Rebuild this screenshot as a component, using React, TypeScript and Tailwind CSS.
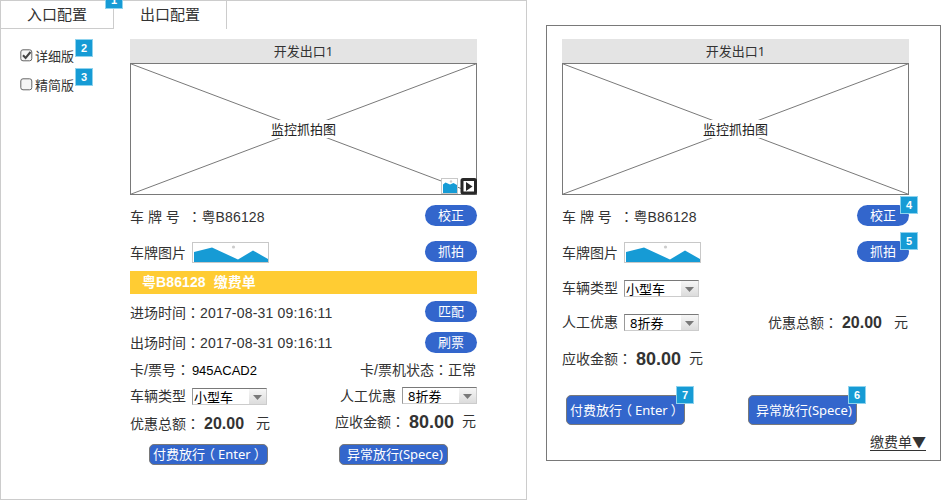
import React from 'react';

const SANS = "font-['Liberation_Sans','Noto_Sans_CJK_SC',sans-serif]";
const UI = "font-['Noto_Sans','Noto_Sans_CJK_SC',sans-serif]";

function Colon() {
  return <span className="font-['Noto_Sans_CJK_TC',sans-serif]">：</span>;
}

function Badge({ n, className }: { n: number; className: string }) {
  return (
    <span
      className={`absolute flex h-[18px] w-[18px] items-center justify-center border border-[#8fd3ee] bg-[#169bd5] text-[11px] leading-none font-bold text-white ${className}`}
    >
      {n}
    </span>
  );
}

function Pill({ children, badge }: { children: React.ReactNode; badge?: number }) {
  return (
    <button className={`relative ml-auto h-[21px] w-[52px] rounded-full bg-[#3366cc] text-[13px] leading-[21px] text-white ${UI}`}>
      {children}
      {badge && <Badge n={badge} className={`-top-[9px] left-[43px] ${SANS}`} />}
    </button>
  );
}

function Action({ children, className, badge }: { children: React.ReactNode; className: string; badge?: number }) {
  return (
    <button className={`relative flex items-center rounded-[5px] border border-[#797979] bg-[#3366cc] text-[13px] leading-none whitespace-nowrap text-white ${UI} ${className}`}>
      {children}
      {badge && <Badge n={badge} className={`-top-[10px] -right-[10px] ${SANS}`} />}
    </button>
  );
}

function PayLabel() {
  return (
    <>
      付费放行<span className="-ml-[3px] mr-[3px]">（</span>Enter<span className="ml-[3px]">）</span>
    </>
  );
}

function Select({ children, className = '' }: { children: React.ReactNode; className?: string }) {
  return (
    <div className={`flex h-[17px] w-[75px] shrink-0 border border-t-[#797979] border-r-[#ccc] border-b-[#ccc] border-l-[#999] bg-white text-[13px] leading-[16px] text-black ${UI} ${className}`}>
      <span className="flex-1 pl-px whitespace-pre">{children}</span>
      <span className="flex h-[15px] w-[17px] items-center justify-center bg-linear-to-b from-[#f6f6f6] to-[#dcdcdc] pt-[2px]">
        <svg width="9" height="5" viewBox="0 0 9 5">
          <path d="M0 0h9L4.5 5z" fill="#797979" />
        </svg>
      </span>
    </div>
  );
}

function PlateImage() {
  return (
    <svg className="ml-[6px] shrink-0" width="77" height="21" viewBox="0 0 77 21">
      <rect x=".5" y=".5" width="76" height="20" fill="#fff" stroke="#c8c8c8" />
      <path d="M2 10L20 5.500 46 17.500 61 8.500 76 17V20H2z" fill="#169bd5" />
      <circle cx="41.500" cy="5" r="1.600" fill="#ccc" />
    </svg>
  );
}

function Monitor({ controls = false }: { controls?: boolean }) {
  return (
    <>
      <div className={`h-6 bg-[#e4e4e4] text-center text-[13px] leading-[25px] text-[#333] ${UI}`}>开发出口1</div>
      <div className="relative flex h-[132px] items-center justify-center">
        <svg className="absolute inset-0" width="347" height="132" viewBox="0 0 347 132">
          <rect x=".5" y=".5" width="346" height="131" fill="#fff" stroke="#797979" />
          <path d="M0 .5L347 131.500M0 131.500L347 .5" stroke="#797979" />
        </svg>
        <span className={`relative h-[18px] bg-white px-[2px] text-[13px] leading-[18px] text-[#222] ${UI}`}>监控抓拍图</span>
        {controls && (
          <svg className="absolute right-0 bottom-0" width="36" height="17" viewBox="0 0 36 17">
            <rect x=".5" y=".5" width="16" height="15" fill="#fff" stroke="#c8c8c8" />
            <path d="M2 15V6.500L4.500 4.500 9 6.500 12.500 5 16 7V15z" fill="#169bd5" />
            <circle cx="10" cy="3.500" r="1.200" fill="#ccc" />
            <rect x="21" y="1.500" width="13.500" height="13.500" rx="1" fill="#fff" stroke="#282828" strokeWidth="3" />
            <path d="M25 4L31.500 8.500 25 13z" fill="#282828" />
          </svg>
        )}
      </div>
    </>
  );
}

function Row({ children, className }: { children: React.ReactNode; className: string }) {
  return <div className={`flex items-center whitespace-pre ${className}`}>{children}</div>;
}

function PlateRows({ badges = false }: { badges?: boolean }) {
  return (
    <>
      <Row className="mt-[10px] h-[21px]">
        <span className="pt-[2px]">
          {'车 牌 号  '}<Colon />粤<span className="tracking-[0.15px]">B86128</span>
        </span>
        <Pill badge={badges ? 4 : undefined}>校正</Pill>
      </Row>
      <Row className="mt-[15px] h-[21px]">
        <span className="pt-[2px]">车牌图片</span>
        <div className="pt-[2px]"><PlateImage /></div>
        <Pill badge={badges ? 5 : undefined}>抓拍</Pill>
      </Row>
    </>
  );
}

function Check({ checked = false, label, n }: { checked?: boolean; label: string; n: number }) {
  return (
    <div className={`relative flex h-[29px] items-center text-[13px] ${UI}`}>
      <svg className="mr-[3px] -mt-[2px]" width="13" height="13" viewBox="0 0 13 13">
        <rect x=".8" y=".8" width="11" height="11" rx="2.200" fill="#f5f5f5" stroke="#666" />
        {checked && <path d="M3 6.200L5.600 9 10.500 3" fill="none" stroke="#444" strokeWidth="2" />}
      </svg>
      <span className="-mt-px -ml-px">{label}</span>
      <Badge n={n} className={`-top-[3px] left-[55px] ${SANS}`} />
    </div>
  );
}

export default function App() {
  return (
    <div className={`flex h-[500px] w-[941px] overflow-hidden bg-white text-[14px] leading-[20px] text-[#333] ${SANS}`}>
      <section className="h-[500px] w-[527px] border border-[#ccc]">
        <nav className={`relative flex h-[28px] text-[15px] leading-[27px] ${UI}`}>
          <div className="w-[113px] border-r border-b border-[#ccc] text-center">入口配置</div>
          <div className="w-[113px] border-r border-[#ccc] text-center">出口配置</div>
          <Badge n={1} className={`-top-[10px] left-[104px] ${SANS}`} />
        </nav>
        <div className="flex">
          <aside className="mt-[13px] w-[129px] pl-[19px]">
            <Check checked label="详细版" n={2} />
            <Check label="精简版" n={3} />
          </aside>
          <main className="mt-[10px] w-[347px]">
            <Monitor controls />
            <PlateRows />
            <div className="mt-[9px] h-[23px] bg-[#ffcc33] pl-3 text-[14px] leading-[23px] font-bold whitespace-pre text-white">
              粤<span className="tracking-[0.12px]">{'B86128  '}</span>缴费单
            </div>
            <Row className="mt-[7px] h-[21px]">
              <span className="pt-[2px]">进场时间<Colon /><span className="tracking-[0.18px]">2017-08-31 09:16:11</span></span>
              <Pill>匹配</Pill>
            </Row>
            <Row className="mt-[10px] h-[21px]">
              <span>出场时间<Colon /><span className="tracking-[0.18px]">2017-08-31 09:16:11</span></span>
              <Pill>刷票</Pill>
            </Row>
            <Row className="mt-[6px] h-[21px] justify-between">
              <span>卡/票号<Colon /><span className="ml-[2px] text-[13px] text-black">945ACAD2</span></span>
              <span className="-ml-px pr-px">卡/票机状态<Colon />正常</span>
            </Row>
            <Row className="mt-[6px] h-[20px]">
              <span>车辆类型</span>
              <Select className="mt-[1px] ml-[6px]">小型车</Select>
              <span className="-mt-px ml-auto">人工优惠</span>
              <Select className="-mt-[1px] ml-[6px]"><span className="pl-1">8折券</span></Select>
            </Row>
            <Row className="mt-[7px] h-[20px]">
              <span>优惠总额<Colon /></span>
              <b className="mt-px ml-1 text-[16px]">20.00</b>
              <span className="ml-3">元</span>
              <div className="-mt-1 mr-px ml-auto flex items-center">
                <span>应收金额<Colon /></span>
                <b className="mt-px ml-1 text-[18px]">80.00</b>
                <span className="ml-2">元</span>
              </div>
            </Row>
            <Row className="mt-[11px] h-[21px]">
              <Action className="ml-[19px] h-[21px] w-[119px] pl-[3px]"><PayLabel /></Action>
              <Action className="ml-[71px] h-[21px] w-[109px] pl-[7px]">异常放行(Spece)</Action>
            </Row>
          </main>
        </div>
      </section>

      <section className="mt-[25px] ml-[19px] h-[436px] w-[395px] border border-[#797979] pt-[13px] pl-[15px]">
        <div className="w-[347px]">
          <Monitor />
          <PlateRows badges />
          <Row className="mt-[16px] h-[20px]">
            <span>车辆类型</span>
            <Select className="mt-[1px] ml-[6px]">小型车</Select>
          </Row>
          <Row className="mt-[14px] h-[20px]">
            <span>人工优惠</span>
            <Select className="mt-[1px] ml-[6px]"><span className="pl-1">8折券</span></Select>
            <span className="ml-auto">优惠总额<Colon /></span>
            <b className="mt-px ml-1 text-[16px]">20.00</b>
            <span className="mr-px ml-3">元</span>
          </Row>
          <Row className="mt-[16px] h-[20px]">
            <span>应收金额<Colon /></span>
            <b className="mt-px ml-1 text-[18px]">80.00</b>
            <span className="ml-2">元</span>
          </Row>
          <Row className="mt-[27px] h-[30px]">
            <Action badge={7} className="ml-[4px] h-[30px] w-[119px] pl-[3px]"><PayLabel /></Action>
            <Action badge={6} className="ml-[63px] h-[30px] w-[109px] pl-[7px]">异常放行(Spece)</Action>
          </Row>
        </div>
        <div className="mt-[6px] pr-[14px] text-right">
          <span className="underline underline-offset-[3px]">缴费单<span className="font-['Noto_Sans_CJK_SC',sans-serif]">▼</span></span>
        </div>
      </section>
    </div>
  );
}
